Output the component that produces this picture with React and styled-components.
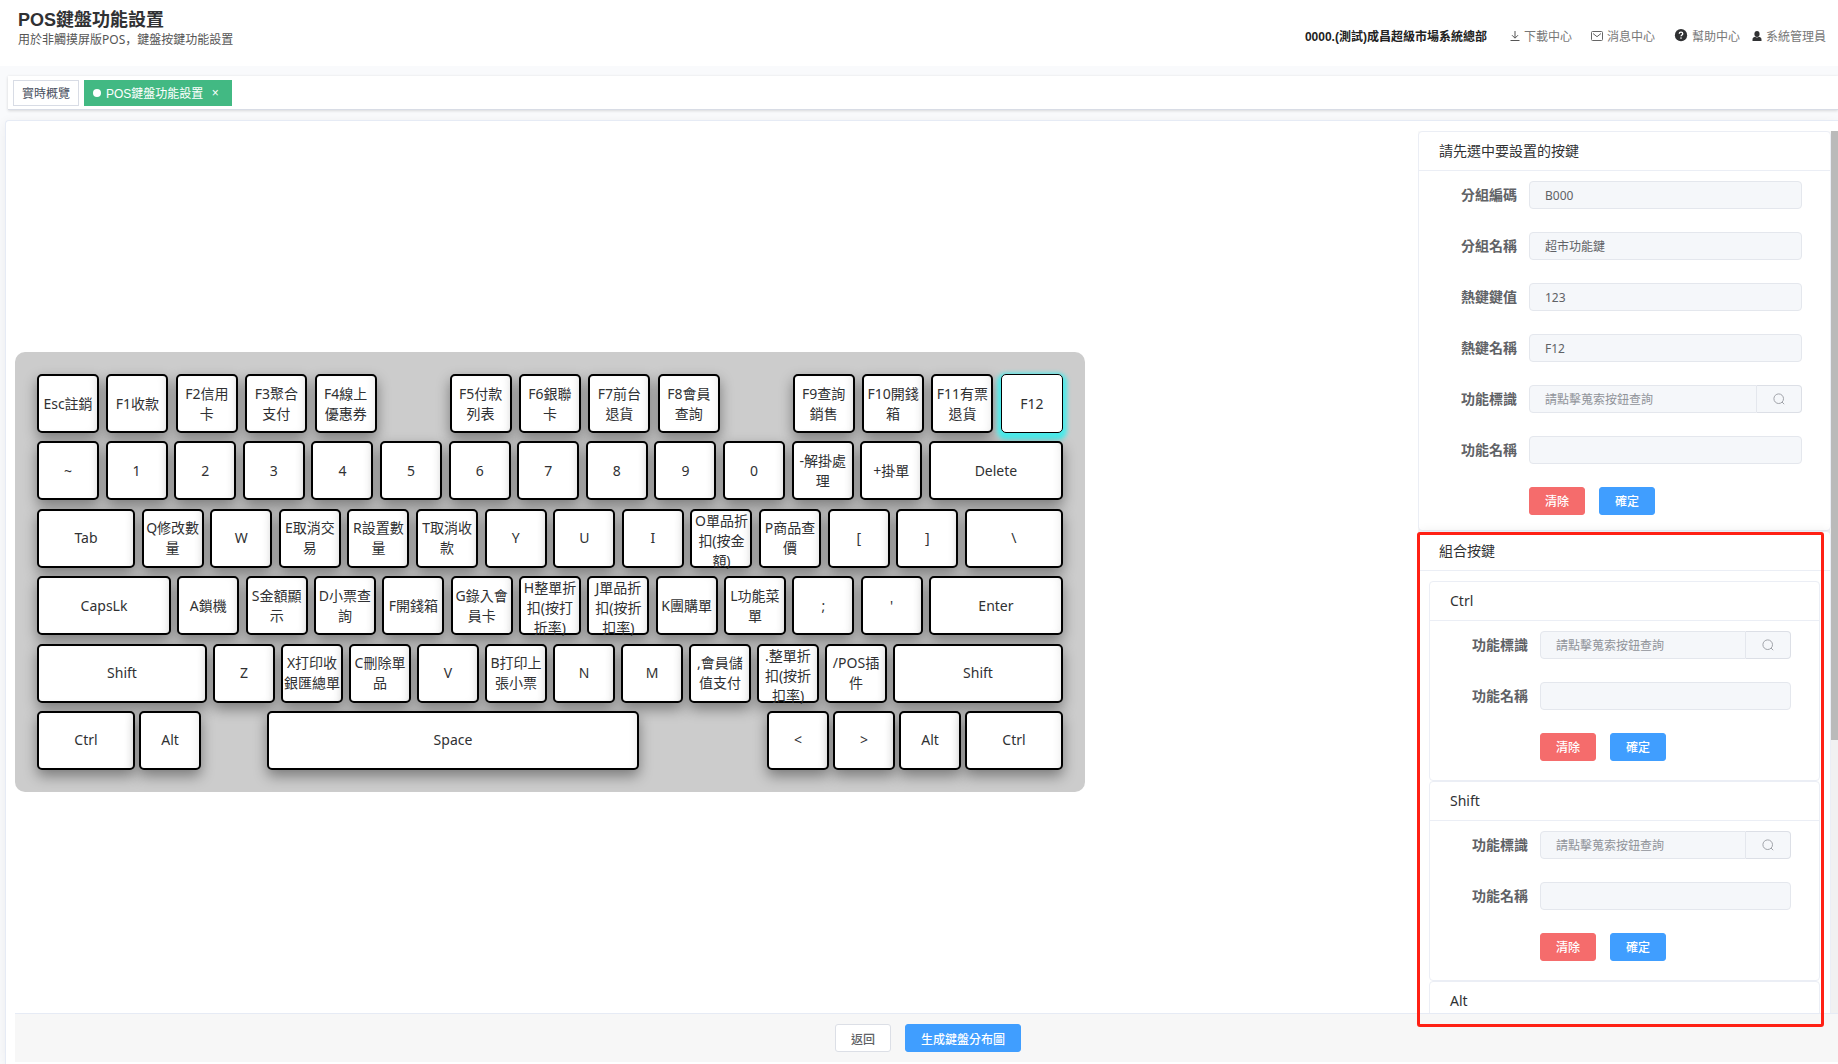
import React, { useState } from 'react';
import styled, { createGlobalStyle } from 'styled-components';

const gap = { type: 'gap' };

const rows = [
  [
    { label: 'Esc註銷' }, { label: 'F1收款' }, { label: 'F2信用卡' }, { label: 'F3聚合支付' }, { label: 'F4線上優惠券' },
    gap,
    { label: 'F5付款列表' }, { label: 'F6銀聯卡' }, { label: 'F7前台退貨' }, { label: 'F8會員查詢' },
    gap,
    { label: 'F9查詢銷售' }, { label: 'F10開錢箱' }, { label: 'F11有票退貨' }, { label: 'F12' },
  ],
  [
    { label: '~' }, { label: '1' }, { label: '2' }, { label: '3' }, { label: '4' }, { label: '5' }, { label: '6' },
    { label: '7' }, { label: '8' }, { label: '9' }, { label: '0' }, { label: '-解掛處理' }, { label: '+掛單' },
    { label: 'Delete', size: 'l' },
  ],
  [
    { label: 'Tab', size: 'm' }, { label: 'Q修改數量' }, { label: 'W' }, { label: 'E取消交易' }, { label: 'R設置數量' },
    { label: 'T取消收款' }, { label: 'Y' }, { label: 'U' }, { label: 'I' }, { label: 'O單品折扣(按金額)' },
    { label: 'P商品查價' }, { label: '[' }, { label: ']' }, { label: '\\', size: 'm' },
  ],
  [
    { label: 'CapsLk', size: 'l' }, { label: 'A鎖機' }, { label: 'S金額顯示' }, { label: 'D小票查詢' }, { label: 'F開錢箱' },
    { label: 'G錄入會員卡' }, { label: 'H整單折扣(按打折率)' }, { label: 'J單品折扣(按折扣率)' }, { label: 'K團購單' },
    { label: 'L功能菜單' }, { label: ';' }, { label: "'" }, { label: 'Enter', size: 'l' },
  ],
  [
    { label: 'Shift', size: 'xl' }, { label: 'Z' }, { label: 'X打印收銀匯總單' }, { label: 'C刪除單品' }, { label: 'V' },
    { label: 'B打印上張小票' }, { label: 'N' }, { label: 'M' }, { label: ',會員儲值支付' }, { label: '.整單折扣(按折扣率)' },
    { label: '/POS插件' }, { label: 'Shift', size: 'xl' },
  ],
  [
    { label: 'Ctrl', size: 'm' }, { label: 'Alt' }, gap, { label: 'Space', size: 'space' }, gap, gap,
    { label: '<' }, { label: '>' }, { label: 'Alt' }, { label: 'Ctrl', size: 'm' },
  ],
];

const keyWidths = { s: '62px', m: '98px', l: '134px', xl: '170px', space: '372px' };

const DownloadIcon = () => (
  <svg width="10" height="12" viewBox="0 0 10 12" fill="none" stroke="#555" strokeWidth="1">
    <path d="M5 1v7M2 5.200l3 3 3-3M0.500 10.500h9" />
  </svg>
);

const MailIcon = () => (
  <svg width="12" height="12" viewBox="0 0 12 12" fill="none" stroke="#666" strokeWidth="1">
    <rect x="0.5" y="1.5" width="11" height="9" rx="1" />
    <path d="M2 3.5l4 3.2 4-3.2" />
  </svg>
);

const HelpIcon = () => (
  <svg width="14" height="14" viewBox="0 0 14 16">
    <circle cx="7" cy="7" r="7" fill="#303133" />
    <path d="M5 5.4c0-1.2.9-1.9 2-1.9s2 .7 2 1.8c0 1.4-2 1.5-2 3" fill="none" stroke="#fff" strokeWidth="1.5" />
    <circle cx="7" cy="10.4" r="0.9" fill="#fff" />
  </svg>
);

const UserIcon = () => (
  <svg width="10" height="12" viewBox="0 0 10 12" fill="#303133">
    <ellipse cx="5" cy="4" rx="2.6" ry="3" />
    <path d="M3 6.8C1.2 7.200.5 8 .5 9.800V11h9V9.800C9.500 8 8.800 7.200 7 6.800c-1.200 1-2.800 1-4 0z" />
  </svg>
);

const SearchIcon = () => (
  <svg width="12" height="12" viewBox="0 0 12 12" fill="none" stroke="#a0a3a9" strokeWidth="1">
    <circle cx="5.7" cy="5.7" r="4.8" />
    <path d="M9 9l2.2 2.2" />
  </svg>
);

const FunctionFields = ({ id }) => (
  <>
    <Field>
      <Label htmlFor={`${id}-code`}>功能標識</Label>
      <Group>
        <Input id={`${id}-code`} placeholder="請點擊蒐索按鈕查詢" $joined readOnly />
        <SearchButton type="button" aria-label="查詢"><SearchIcon /></SearchButton>
      </Group>
    </Field>
    <Field>
      <Label htmlFor={`${id}-name`}>功能名稱</Label>
      <Input id={`${id}-name`} readOnly />
    </Field>
    <Actions>
      <Button type="button" $kind="danger">清除</Button>
      <Button type="button" $kind="primary">確定</Button>
    </Actions>
  </>
);

const App = () => {
  const [selected, setSelected] = useState('0-14');

  return (
    <Page>
      <GlobalStyle />
      <Header>
        <div>
          <Title>POS鍵盤功能設置</Title>
          <Subtitle>用於非觸摸屏版POS，鍵盤按鍵功能設置</Subtitle>
        </div>
        <Nav>
          <Shop>0000.(測試)成昌超級市場系統總部</Shop>
          <NavLink href="#download"><DownloadIcon />下載中心</NavLink>
          <NavLink href="#message"><MailIcon />消息中心</NavLink>
          <NavLink href="#help"><HelpIcon />幫助中心</NavLink>
          <NavLink href="#user" $tight><UserIcon />系統管理員</NavLink>
        </Nav>
      </Header>

      <Tags>
        <Tag href="#overview">實時概覽</Tag>
        <Tag href="#keyboard" $active><Dot />POS鍵盤功能設置<Close>×</Close></Tag>
      </Tags>

      <Main>
        <Content>
          <Keyboard>
            {rows.map((row, r) => (
              <KeyRow key={r}>
                {row.map((item, i) => {
                  const id = `${r}-${i}`;
                  if (item.type === 'gap') return <Blank key={id} />;
                  return (
                    <Key key={id} type="button" $size={item.size || 's'} $selected={selected === id} onClick={() => setSelected(id)}>
                      <span>{item.label}</span>
                    </Key>
                  );
                })}
              </KeyRow>
            ))}
          </Keyboard>

          <Side>
            <Panels>
              <Card $raised>
                <CardHeader>請先選中要設置的按鍵</CardHeader>
                <CardBody>
                  <Field>
                    <Label htmlFor="group-code">分組編碼</Label>
                    <Input id="group-code" defaultValue="B000" readOnly />
                  </Field>
                  <Field>
                    <Label htmlFor="group-name">分組名稱</Label>
                    <Input id="group-name" defaultValue="超市功能鍵" readOnly />
                  </Field>
                  <Field>
                    <Label htmlFor="key-value">熱鍵鍵值</Label>
                    <Input id="key-value" defaultValue="123" readOnly />
                  </Field>
                  <Field>
                    <Label htmlFor="key-name">熱鍵名稱</Label>
                    <Input id="key-name" defaultValue="F12" readOnly />
                  </Field>
                  <FunctionFields id="main" />
                </CardBody>
              </Card>
              <Card $raised>
                <CardHeader>組合按鍵</CardHeader>
                <CardBody $nested>
                  {['Ctrl', 'Shift', 'Alt'].map((name) => (
                    <Card key={name}>
                      <CardHeader>{name}</CardHeader>
                      <CardBody>
                        <FunctionFields id={name} />
                      </CardBody>
                    </Card>
                  ))}
                </CardBody>
              </Card>
            </Panels>
            <Track><Thumb /></Track>
            <Highlight />
          </Side>
        </Content>

        <Footer>
          <Button type="button">返回</Button>
          <Button type="button" $kind="primary">生成鍵盤分布圖</Button>
        </Footer>
      </Main>
    </Page>
  );
};

export default App;


const GlobalStyle = createGlobalStyle`
  * {
    box-sizing: border-box;
  }
  body {
    margin: 0;
    background: #f9fafc;
    color: #303133;
    font-family: "Liberation Sans", "Noto Sans CJK TC", sans-serif;
    font-size: 12px;
  }
  button, input {
    font-family: inherit;
    font-size: 12px;
  }
  a {
    color: inherit;
    text-decoration: none;
  }
`;

const Page = styled.div`
  display: flex;
  flex-direction: column;
  height: 100vh;
  overflow: hidden;
`;

const Header = styled.header`
  display: flex;
  justify-content: space-between;
  flex: none;
  height: 66px;
  padding: 9px 12px 0 18px;
  background: #fff;
`;

const Title = styled.h1`
  margin: 0;
  font-size: 18px;
  line-height: 22px;
  font-weight: bold;
`;

/* the SC face keeps the full-width comma at the lower left */
const Subtitle = styled.p`
  margin: 0;
  line-height: 18px;
  color: #555;
  font-family: "Noto Sans", "Noto Sans CJK SC", sans-serif;
`;

const Nav = styled.nav`
  display: flex;
  align-items: center;
  height: 53px;
  gap: 19px;
`;

const Shop = styled.strong`
  margin-right: 4px;
  color: #222;
`;

const NavLink = styled.a`
  display: flex;
  align-items: center;
  gap: 4px;
  margin-left: ${(p) => (p.$tight ? '-7px' : '0')};
  color: #777;
`;

const Tags = styled.nav`
  display: flex;
  align-items: center;
  flex: none;
  gap: 5px;
  height: 34px;
  margin: 10px 0 0 8px;
  padding-left: 5px;
  background: #fff;
  border-bottom: 1px solid #d8dce5;
  box-shadow: 0 1px 3px rgba(0, 0, 0, 0.12), 0 0 3px rgba(0, 0, 0, 0.04);
`;

const Tag = styled.a`
  display: flex;
  align-items: center;
  height: 26px;
  padding: 0 8px;
  border: 1px solid ${(p) => (p.$active ? '#42b983' : '#d8dce5')};
  background: ${(p) => (p.$active ? '#42b983' : '#fff')};
  color: ${(p) => (p.$active ? '#fff' : '#495060')};
`;

const Dot = styled.span`
  width: 8px;
  height: 8px;
  margin-right: 5px;
  border-radius: 50%;
  background: #fff;
`;

const Close = styled.span`
  width: 16px;
  margin-left: 4px;
  text-align: center;
`;

const Main = styled.main`
  display: flex;
  flex-direction: column;
  flex: 1;
  min-height: 0;
  margin: 10px 0 0 5px;
  padding: 10px 0 2px 9px;
  background: #fff;
  border: 1px solid #e6ebf5;
  border-width: 1px 0 0 1px;
  border-top-left-radius: 4px;
  box-shadow: 0 2px 12px rgba(0, 0, 0, 0.06);
`;

const Content = styled.div`
  display: flex;
  align-items: center;
  justify-content: space-between;
  flex: 1;
  gap: 20px;
  min-height: 0;
`;

const Keyboard = styled.section`
  display: flex;
  flex-direction: column;
  justify-content: space-between;
  flex: 0 1 1070px;
  height: 440px;
  padding: 22px;
  border-radius: 10px;
  background: #ccc;
  font-family: "Noto Sans", "Noto Sans CJK TC", sans-serif;
`;

const KeyRow = styled.div`
  display: flex;
  justify-content: space-between;
`;

const Key = styled.button`
  display: flex;
  flex: 0 1 ${(p) => keyWidths[p.$size]};
  min-width: 0;
  height: 59px;
  padding: 0 1px;
  border: ${(p) => (p.$selected ? '1px' : '2px')} solid #000;
  border-radius: 5px;
  background: #fff;
  color: #303133;
  font-size: 14px;
  line-height: 20px;
  cursor: pointer;
  box-shadow: ${(p) => (p.$selected
    ? '0 3px 4px 4px #4cebeb'
    : '0 6px 14px rgba(0, 0, 0, 0.4), inset -6px 0 10px -6px rgba(0, 0, 0, 0.1)')};
  span {
    margin: auto;
  }
`;

const Blank = styled.div`
  flex: 0 1 58px;
`;

const Side = styled.aside`
  position: relative;
  display: flex;
  align-self: stretch;
  flex: 0 0 419px;
  min-height: 0;
  font-family: "Noto Sans", "Noto Sans CJK TC", sans-serif;
`;

const Panels = styled.div`
  flex: 1;
  overflow: auto;
  scrollbar-width: none;
`;

const Card = styled.section`
  min-height: ${(p) => (p.$raised ? '400px' : '200px')};
  background: #fff;
  border: 1px solid #ebeef5;
  border-radius: 4px;
  box-shadow: ${(p) => (p.$raised ? '0 2px 12px rgba(0, 0, 0, 0.1)' : 'none')};
`;

const CardHeader = styled.h2`
  margin: 0;
  padding: 0 20px;
  border-bottom: 1px solid #ebeef5;
  font-size: 14px;
  font-weight: normal;
  line-height: 38px;
`;

const CardBody = styled.div`
  padding: ${(p) => (p.$nested ? '10px' : '10px 28px 10px 10px')};
`;

const Field = styled.div`
  display: flex;
  margin-bottom: 23px;
`;

const Label = styled.label`
  flex: 0 0 100px;
  padding-right: 12px;
  text-align: right;
  font-size: 14px;
  font-weight: bold;
  line-height: 28px;
  color: #606266;
`;

const Group = styled.div`
  display: flex;
  flex: 1;
  min-width: 0;
`;

const Input = styled.input`
  flex: 1;
  min-width: 0;
  height: 28px;
  padding: 0 15px;
  border: 1px solid #e4e7ed;
  border-radius: ${(p) => (p.$joined ? '4px 0 0 4px' : '4px')};
  background: #f5f7fa;
  color: #606266;
  outline: none;
  &::placeholder {
    color: #909399;
  }
`;

const SearchButton = styled.button`
  display: flex;
  align-items: center;
  justify-content: center;
  flex: 0 0 45px;
  height: 28px;
  border: 1px solid #dcdfe6;
  border-left: 0;
  border-radius: 0 4px 4px 0;
  background: #f5f7fa;
`;

const Actions = styled.div`
  display: flex;
  gap: 14px;
  padding-left: 100px;
`;

const kinds = {
  primary: '#409eff',
  danger: '#f56c6c',
};

const Button = styled.button`
  height: 28px;
  padding: 0 15px;
  border: 1px solid ${(p) => kinds[p.$kind] || '#dcdfe6'};
  border-radius: 3px;
  background: ${(p) => kinds[p.$kind] || '#fff'};
  color: ${(p) => (p.$kind ? '#fff' : '#606266')};
  font-weight: 500;
  cursor: pointer;
`;

const Track = styled.div`
  flex: 0 0 7px;
  background: #f1f1f1;
`;

const Thumb = styled.div`
  height: 69%;
  background: #bababa;
`;

const Highlight = styled.div`
  position: absolute;
  top: 401px;
  right: 14px;
  bottom: -14px;
  left: -1px;
  border: 3px solid #ff2014;
  border-radius: 3px;
  pointer-events: none;
`;

const Footer = styled.footer`
  display: flex;
  justify-content: center;
  flex: none;
  gap: 14px;
  padding: 10px 0 10px 3px;
  border-top: 1px solid #e6ebf5;
  background: #f7f7f7;
`;
